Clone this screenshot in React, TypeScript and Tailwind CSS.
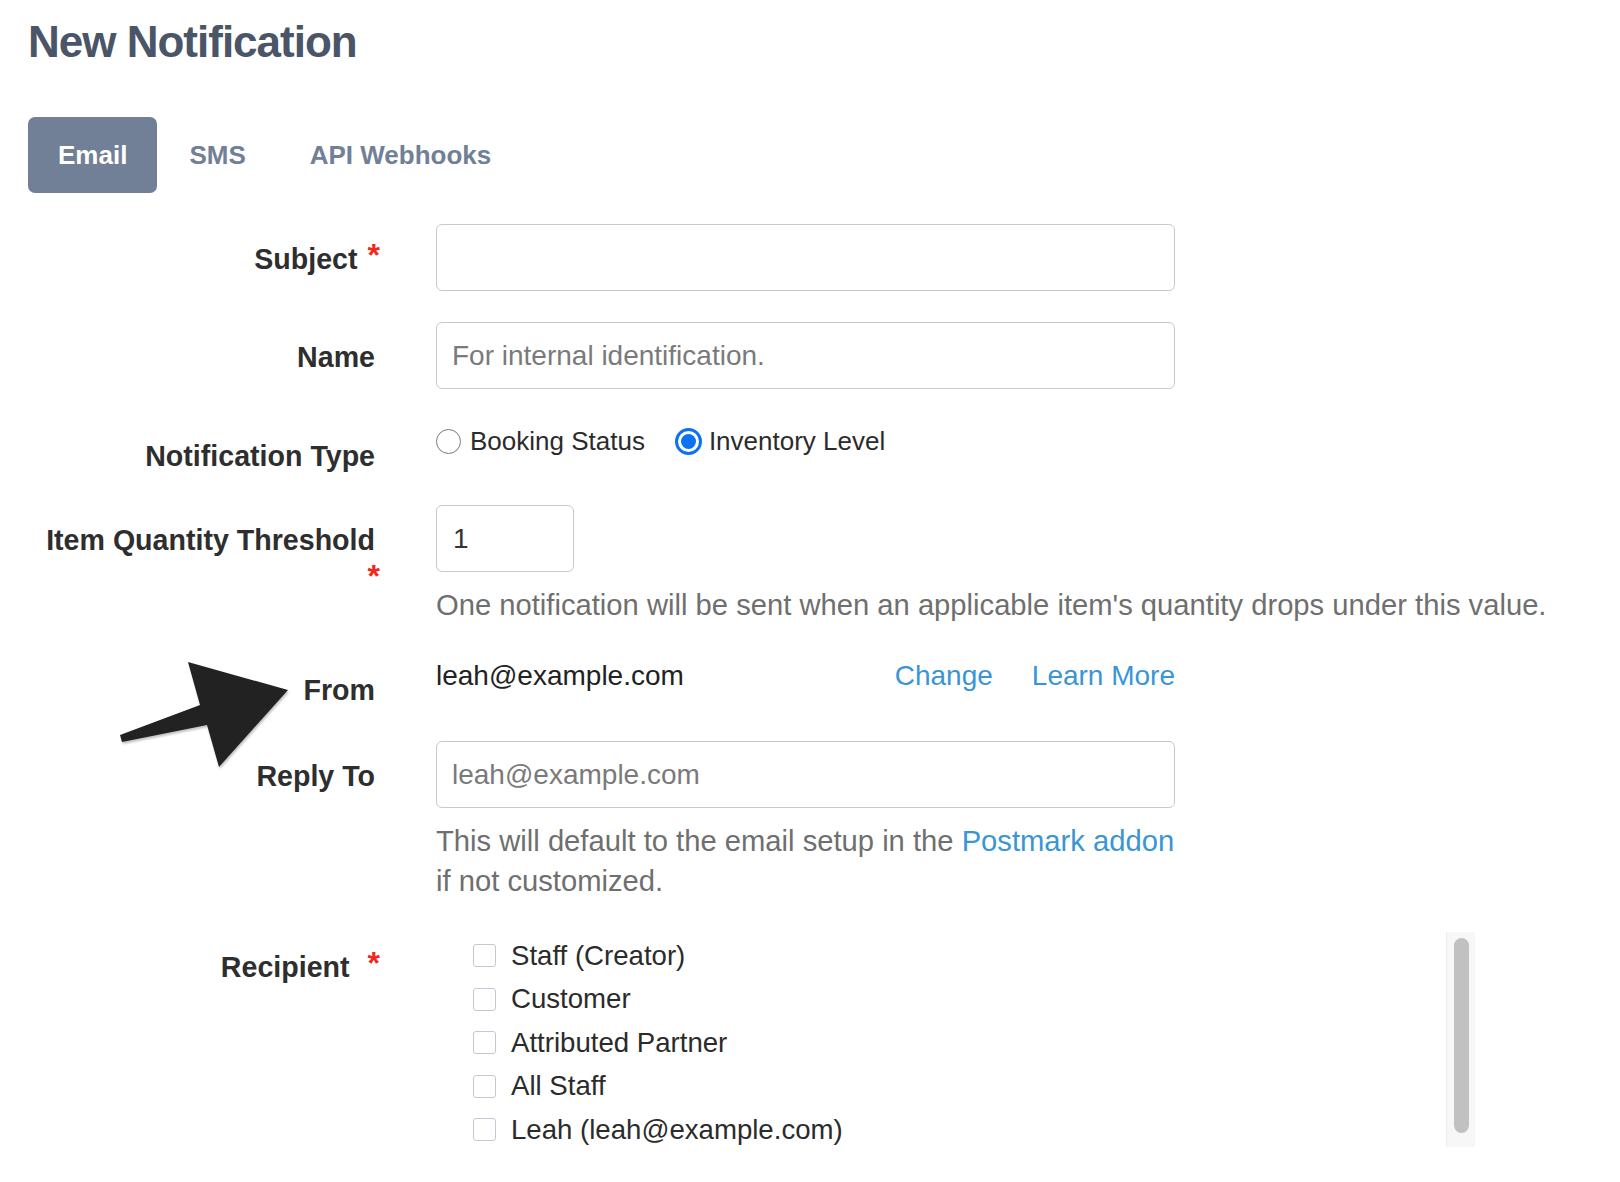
import React from "react";

const FONT = "font-['Liberation_Sans',Arial,Helvetica,sans-serif]";

function Star({ className = "" }: { className?: string }) {
  return (
    <span className={"inline-block text-[32px] leading-none font-bold text-[#f2281c] " + className}>*</span>
  );
}

function Checkbox({ label }: { label: string }) {
  return (
    <div className="flex h-[43.5px] items-center">
      <span className="h-[23px] w-[23px] shrink-0 rounded-[3px] border-[1.5px] border-[#c6c6d4] bg-white" />
      <span className="ml-[15px] text-[27.6px] leading-none text-[#2b2b2b]">{label}</span>
    </div>
  );
}

export default function App() {
  return (
    <div className={"relative min-h-[1182px] w-full bg-white " + FONT}>
      <div className="pl-[28px] pt-[20px]">
        <h1 className="text-[44px] font-bold leading-none tracking-[-1px] text-[#4a5568]">New Notification</h1>

        <div className="mt-[53px] flex">
          <div className="flex h-[76px] items-center rounded-[7px] bg-[#718096] px-[30px] text-[26px] font-bold text-white">
            Email
          </div>
          <div className="flex h-[76px] items-center px-[32px] text-[26px] font-bold text-[#718096]">SMS</div>
          <div className="flex h-[76px] items-center px-[32px] text-[26px] font-bold text-[#718096]">API Webhooks</div>
        </div>
      </div>

      <div className="pl-[28px] text-[#2e2e2e]">
        {/* Subject */}
        <div className="mt-[31px] flex items-start">
          <div className="flex w-[352px] shrink-0 items-start justify-end pt-[18px]">
            <span className="text-[28.6px] font-bold leading-[34px]">Subject</span>
            <Star className="ml-[10px] -mt-[3px]" />
          </div>
          <input
            className="ml-[56px] h-[67px] w-[739px] rounded-[6px] border-[1.5px] border-[#c9c9c9] bg-white px-[15px] text-[28px] text-[#333] outline-none"
            defaultValue=""
          />
        </div>

        {/* Name */}
        <div className="mt-[31px] flex items-start">
          <div className="w-[352px] shrink-0 pr-[5px] pt-[18px] text-right text-[28.6px] font-bold leading-[34px]">Name</div>
          <input
            className="ml-[56px] h-[67px] w-[739px] rounded-[6px] border-[1.5px] border-[#c9c9c9] bg-white px-[15px] text-[28px] text-[#333] outline-none placeholder:text-[#7a7a7a]"
            placeholder="For internal identification."
          />
        </div>

        {/* Notification Type */}
        <div className="mt-[30px] flex items-start">
          <div className="w-[352px] shrink-0 pr-[5px] pt-[20px] text-right text-[28.6px] font-bold leading-[34px]">
            Notification Type
          </div>
          <div className="ml-[56px] mt-[3px] flex h-[38px] items-center text-[26px] text-[#2b2b2b]">
            <span className="h-[25px] w-[25px] rounded-full border-[1.5px] border-[#7a7a7a] bg-white" />
            <span className="ml-[9px] leading-none">Booking Status</span>
            <span className="ml-[30px] flex h-[27px] w-[27px] items-center justify-center rounded-full border-[3px] border-[#0b72f0] bg-white">
              <span className="h-[15px] w-[15px] rounded-full bg-[#0b72f0]" />
            </span>
            <span className="ml-[7px] leading-none">Inventory Level</span>
          </div>
        </div>

        {/* Item Quantity Threshold */}
        <div className="mt-[32px] flex items-start">
          <div className="w-[352px] shrink-0 pt-[18px] text-right">
            <div className="pr-[5px] text-[28.6px] font-bold leading-[34px]">Item Quantity Threshold</div>
            <div className="mt-[3px] flex justify-end">
              <Star />
            </div>
          </div>
          <div className="ml-[56px] flex flex-col">
            <input
              className="h-[67px] w-[138px] rounded-[6px] border-[1.5px] border-[#c9c9c9] bg-white px-[16px] text-[28px] text-[#333] outline-none"
              defaultValue="1"
            />
            <p className="mt-[13px] whitespace-nowrap text-[29.2px] leading-[40px] text-[#6f6f6f]">
              One notification will be sent when an applicable item's quantity drops under this value.
            </p>
          </div>
        </div>

        {/* From */}
        <div className="mt-[34px] flex items-start">
          <div className="w-[352px] shrink-0 pr-[5px] pt-[14px] text-right text-[28.6px] font-bold leading-[34px]">From</div>
          <div className="ml-[56px] flex w-[739px] items-center text-[28px] leading-[34px]">
            <span className="flex-1 text-[#222]">leah@example.com</span>
            <a className="text-[#3a95d5]">Change</a>
            <a className="ml-[39px] text-[#3a95d5]">Learn More</a>
          </div>
        </div>

        {/* Reply To */}
        <div className="mt-[34px] flex items-start">
          <div className="w-[352px] shrink-0 pr-[5px] pt-[18px] text-right text-[28.6px] font-bold leading-[34px]">Reply To</div>
          <div className="ml-[56px] flex w-[739px] flex-col">
            <input
              className="h-[67px] w-[739px] rounded-[6px] border-[1.5px] border-[#c9c9c9] bg-white px-[15px] text-[28px] text-[#333] outline-none placeholder:text-[#7a7a7a]"
              placeholder="leah@example.com"
            />
            <p className="mt-[13px] text-[29.2px] leading-[40px] text-[#6f6f6f]">
              This will default to the email setup in the <a className="text-[#3a95d5]">Postmark addon</a> if not
              customized.
            </p>
          </div>
        </div>

        {/* Recipient */}
        <div className="mt-[31px] flex items-start">
          <div className="flex w-[352px] shrink-0 items-start justify-end pt-[18px]">
            <span className="text-[28.6px] font-bold leading-[34px]">Recipient</span>
            <Star className="ml-[18px] -mt-[3px]" />
          </div>
          <div className="ml-[56px] flex h-[215px] w-[1039px] overflow-hidden">
            <div className="flex-1 pl-[37px] pt-[2px]">
              <Checkbox label="Staff (Creator)" />
              <Checkbox label="Customer" />
              <Checkbox label="Attributed Partner" />
              <Checkbox label="All Staff" />
              <Checkbox label="Leah (leah@example.com)" />
            </div>
            <div className="w-[29px] shrink-0 border-l border-[#ececec] bg-[#f7f7f7] pl-[7px] pt-[6px]">
              <div className="h-[195px] w-[15px] rounded-full bg-[#c1c1c1]" />
            </div>
          </div>
        </div>
      </div>

      {/* annotation arrow */}
      <svg
        className="pointer-events-none absolute left-[110px] top-[655px]"
        width="190"
        height="120"
        viewBox="0 0 190 120"
      >
        <polygon
          points="10,80 90,50 78,7 178,35 109,112 97,70 12,87"
          fill="#222222"
          style={{ filter: "drop-shadow(1px 2px 1px rgba(0,0,0,0.25))" }}
        />
      </svg>
    </div>
  );
}
